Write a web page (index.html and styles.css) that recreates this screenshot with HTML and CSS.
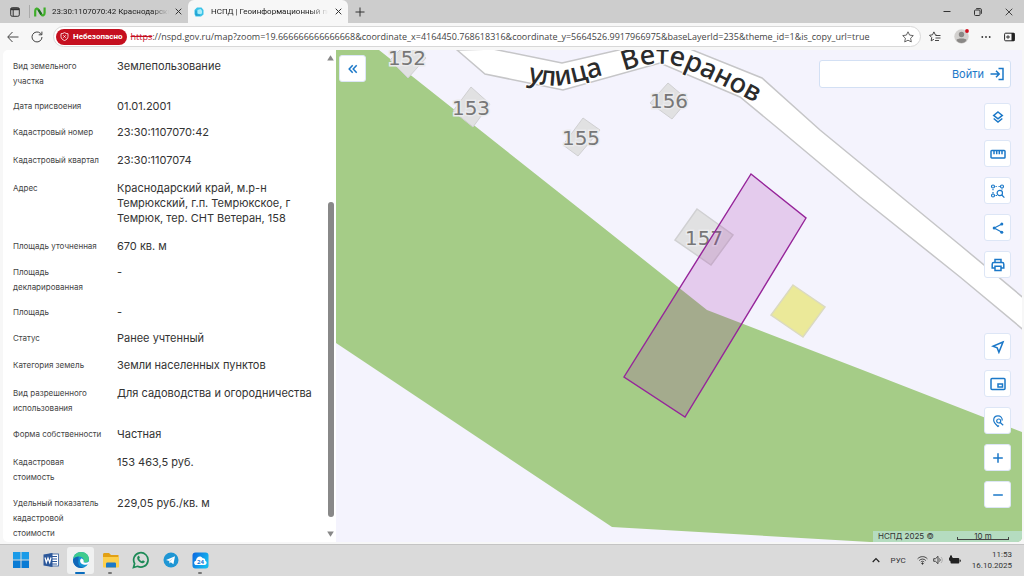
FILE: index.html
```html
<!DOCTYPE html>
<html lang="ru">
<head>
	<meta charset="utf-8">
	<title>НСПД | Геоинформационный портал</title>
	<link rel="stylesheet" href="styles.css">
</head>
<body>
	<!-- Tabs -->
	<div class="tabbar">
		<button class="tab-menu" aria-label="Вкладки">
			<svg width="10" height="10" viewBox="0 0 10 10" fill="none" stroke="#333"><rect x="0.7" y="0.7" width="8.6" height="8.6" rx="1.5"/><path d="M0.7 2.2h8.6" stroke-width="2"/><path d="M3.2 3v6"/></svg>
		</button>
		<div class="tab">
			<svg width="12" height="10" viewBox="0 0 12 10" fill="none" stroke="#3fae2a" stroke-width="2.2"><path d="M1.200 9.500V4C1.200 1.200 3.500 0.800 4.500 2.800l2.800 4.600c1.200 1.800 3.300 1 3.300-1.400V0.500"/><path d="M4.500 2.800l2.800 4.600" stroke="#1d6b22"/></svg>
			<span class="tab-title">23:30:1107070:42 Краснодарский край</span>
			<button class="tab-close" aria-label="Закрыть"><svg width="7" height="7" viewBox="0 0 7 7" stroke="#333"><path d="M0.700 0.700l5.600 5.600M6.300 0.700L0.700 6.300"/></svg></button>
		</div>
		<div class="tab active">
			<svg width="10" height="10" viewBox="0 0 10 10"><path d="M3 0.500h4.500L9.500 3v4.500L7 9.500H1.500L0.500 7V3z" fill="#3cc3e8"/><path d="M3.500 3l3-1 1.500 1.500v3L5 7.500 3.500 6z" fill="#a9ecf8"/><path d="M2 3.500v4.500h4" stroke="#1590c8" fill="none"/></svg>
			<span class="tab-title">НСПД | Геоинформационный портал</span>
			<button class="tab-close" aria-label="Закрыть"><svg width="7" height="7" viewBox="0 0 7 7" stroke="#333"><path d="M0.700 0.700l5.600 5.600M6.300 0.700L0.700 6.300"/></svg></button>
		</div>
		<button class="tab-new" aria-label="Новая вкладка"><svg width="10" height="10" viewBox="0 0 10 10" stroke="#333"><path d="M5 0.500v9M0.500 5h9"/></svg></button>
		<div class="window-buttons">
			<button aria-label="Свернуть"><svg width="8" height="8" viewBox="0 0 8 8" stroke="#333"><path d="M0.500 3.500h7"/></svg></button>
			<button aria-label="Развернуть"><svg width="8" height="8" viewBox="0 0 8 8" fill="none" stroke="#333"><rect x="0.500" y="2" width="5.500" height="5.500" rx="1"/><path d="M2.200 0.600h4a1.200 1.200 0 0 1 1.200 1.200v4"/></svg></button>
			<button aria-label="Закрыть окно"><svg width="8" height="8" viewBox="0 0 8 8" stroke="#333" stroke-width="0.900"><path d="M0.700 0.700l6.600 6.600M7.300 0.700L0.700 7.300"/></svg></button>
		</div>
	</div>

	<!-- Address bar -->
	<div class="toolbar">
		<button aria-label="Назад"><svg width="12" height="12" viewBox="0 0 12 12" fill="none" stroke="#444"><path d="M11.500 6H1M5.500 1L0.700 6l4.800 5"/></svg></button>
		<button aria-label="Обновить"><svg width="12" height="12" viewBox="0 0 12 12" fill="none" stroke="#444"><path d="M11 6A5 5 0 1 1 9.300 2.200L10.800 3.600M10.900 0.600v3.200H7.700"/></svg></button>
		<div class="address">
			<button class="unsafe">
				<svg width="9" height="9" viewBox="0 0 9 9" fill="none" stroke="#fff" stroke-width="0.800"><path d="M4.500 0.600C5.500 1.400 6.700 1.700 8 1.700v2.800c0 2-1.500 3.300-3.500 4C2.500 7.800 1 6.500 1 4.500V1.700c1.300 0 2.500-.3 3.500-1.100z"/><path d="M3.300 3.300l2.400 2.400M5.700 3.300L3.300 5.700"/></svg>
				Небезопасно
			</button>
			<label class="scheme" for="url">https</label>
			<input id="url" type="text" value="://nspd.gov.ru/map?zoom=19.666666666666668&amp;coordinate_x=4164450.768618316&amp;coordinate_y=5664526.9917966975&amp;baseLayerId=235&amp;theme_id=1&amp;is_copy_url=true">
			<button aria-label="В избранное"><svg width="12" height="12" viewBox="0 0 12 12" fill="none" stroke="#555" stroke-width="0.900" stroke-linejoin="round"><path d="M6 0.800l1.600 3.300 3.700.5-2.700 2.600.7 3.700L6 9.200l-3.300 1.700.7-3.700L0.700 4.600l3.700-.5z"/></svg></button>
		</div>
		<div class="toolbar-icons">
			<button aria-label="Избранное"><svg width="12" height="12" viewBox="0 0 12 12" fill="none" stroke="#333" stroke-width="0.900"><path d="M7.500 4L6.300 3.800 4.900 0.900 3.500 3.800 0.500 4.300l2.200 2.200-.5 3.300 2.700-1.500M6.500 4.500h5M6.500 7h5M6 9.500h4"/></svg></button>
			<button class="profile" aria-label="Профиль"><svg width="15" height="15" viewBox="0 0 15 15"><circle cx="7.500" cy="7.500" r="7.200" fill="#d2d0ce"/><circle cx="7.500" cy="5.500" r="2.700" fill="#8a8886"/><path d="M2.500 11c0-2 10-2 10 0-1 4-9 4-10 0z" fill="#8a8886"/><circle cx="13" cy="2" r="1.900" fill="#d1101f"/></svg></button>
			<button aria-label="Меню"><svg width="10" height="10" viewBox="0 0 10 10" fill="#333"><circle cx="1.300" cy="5" r="0.900"/><circle cx="5" cy="5" r="0.900"/><circle cx="8.700" cy="5" r="0.900"/></svg></button>
			<button aria-label="Боковая панель"><svg width="11" height="10" viewBox="0 0 11 10" fill="none" stroke="#222"><rect x="0.600" y="1.200" width="9.800" height="7.600" rx="1"/><path d="M9 1v8" stroke-width="3"/><path d="M2 5h4M4 3.200v3.600" stroke-width="0.900"/></svg></button>
		</div>
	</div>

	<div class="page">
		<!-- Object card -->
		<div class="sidebar">
			<dl class="props">
				<div class="row"><dt>Вид земельного участка</dt><dd>Землепользование</dd></div>
				<div class="row"><dt>Дата присвоения</dt><dd>01.01.2001</dd></div>
				<div class="row tall"><dt>Кадастровый номер</dt><dd>23:30:1107070:42</dd></div>
				<div class="row tall"><dt>Кадастровый квартал</dt><dd>23:30:1107074</dd></div>
				<div class="row tall"><dt>Адрес</dt><dd>Краснодарский край, м.р-н Темрюкский, г.п. Темрюкское, г Темрюк, тер. СНТ Ветеран, 158</dd></div>
				<div class="row"><dt>Площадь уточненная</dt><dd>670 кв. м</dd></div>
				<div class="row"><dt>Площадь декларированная</dt><dd>-</dd></div>
				<div class="row"><dt>Площадь</dt><dd>-</dd></div>
				<div class="row tall"><dt>Статус</dt><dd>Ранее учтенный</dd></div>
				<div class="row tall"><dt>Категория земель</dt><dd>Земли населенных пунктов</dd></div>
				<div class="row tall"><dt>Вид разрешенного использования</dt><dd>Для садоводства и огородничества</dd></div>
				<div class="row tall"><dt>Форма собственности</dt><dd>Частная</dd></div>
				<div class="row tall"><dt>Кадастровая стоимость</dt><dd>153 463,5 руб.</dd></div>
				<div class="row tall"><dt>Удельный показатель кадастровой стоимости</dt><dd>229,05 руб./кв. м</dd></div>
			</dl>
			<div class="scrollbar">
				<svg width="7" height="6" viewBox="0 0 7 6" fill="#888"><path d="M3.500 0.300L6.800 5.500H0.200z"/></svg>
				<div class="track"><div class="thumb"></div></div>
				<svg width="7" height="6" viewBox="0 0 7 6" fill="#888"><path d="M3.500 5.700L0.200 0.500h6.600z"/></svg>
			</div>
		</div>

		<!-- Map -->
		<div class="map">
			<svg class="map-canvas" viewBox="0 0 686 492" preserveAspectRatio="xMinYMin slice">
				<rect width="686" height="492" fill="#f4f3fd"/>
				<path fill="#a5cc87" d="M0 0H43L264 175 371 260 524 319 686 382V492H534L276 477 0 293z"/>
				<g fill="#fff" stroke="#c6c6c8" stroke-width="1.500">
					<path d="M121 0L149 24 227 40 324 13 404 47 444 80 524 147 624 227 690 282V250L624 195 484 80 426 28 354-1H287L226 13 157-1z"/>
				</g>
				<g fill="#e1e1e2" stroke="#d0d0d2">
					<path d="M72-8L90 8 72 28 54 10z"/>
					<path d="M135 37L154 54 137 77 117 61z"/>
					<path d="M247 68L264 80 242 106 227 95z"/>
					<path d="M332 33L352 50 336 69 314 53z"/>
					<path d="M361 159L397 185 375 215 339 190z" stroke-width="1.500"/>
				</g>
				<path d="M457 235L489 257 467 287 435 265z" fill="#ebe999" stroke="#dbdac0" stroke-width="1.500"/>
				<g class="house">
					<text x="71" y="15">152</text>
					<text x="135" y="65">153</text>
					<text x="245" y="95">155</text>
					<text x="333" y="58">156</text>
					<text x="368" y="195">157</text>
				</g>
				<path id="street1" d="M191 31Q213 38 232 34T284 20" fill="none"/>
				<path id="street2" d="M288 21Q322 8 348 18T436 62" fill="none"/>
				<g class="street">
					<text><textPath href="#street1">улица</textPath></text>
					<text><textPath href="#street2">Ветеранов</textPath></text>
				</g>
				<path d="M415 124L470 168 349 367 288 327z" fill="#a020a8" fill-opacity="0.190" stroke="#96259a" stroke-width="1.400"/>
			</svg>

			<button class="tool collapse" aria-label="Свернуть панель"><svg width="10" height="10" viewBox="0 0 10 10"><path d="M4.700 1.300L1.200 5l3.500 3.700M8.700 1.300L5.200 5l3.500 3.700"/></svg></button>

			<div class="login-bar">
				<button class="login">Войти
					<svg width="14" height="14" viewBox="0 0 14 14"><path d="M0.500 7h8.500M6 3.800L9.200 7 6 10.200M8.500 1.500h4.500v11H8.500"/></svg>
				</button>
			</div>

			<div class="tools top">
				<button class="tool" aria-label="Слои"><svg width="14" height="14" viewBox="0 0 14 14"><path d="M7 2l4.300 3.400L7 8.800 2.700 5.400zM2.700 8.500L7 12l4.300-3.500"/></svg></button>
				<button class="tool" aria-label="Линейка"><svg width="16" height="14" viewBox="0 0 16 14"><rect x="1" y="3.500" width="14" height="7.500" rx="0.800"/><path d="M4 4v3.200M6.700 4v3.200M9.300 4v3.200M12 4v3.200"/></svg></button>
				<button class="tool" aria-label="Поиск по области"><svg width="16" height="16" viewBox="0 0 16 16"><g stroke-width="1.200"><circle cx="3" cy="3.500" r="1.500"/><circle cx="12" cy="3.500" r="1.500"/><circle cx="3" cy="12.500" r="1.500"/><path d="M5.500 3.500h1.300M8.500 3.500h1.300M3 6v1.300M3 9v1.500M5.500 12.500h1.500M12 5.500v1"/><circle cx="9.800" cy="10" r="2.700"/><path d="M11.800 12l2.600 2.600"/></g></svg></button>
				<button class="tool" aria-label="Поделиться"><svg width="14" height="14" viewBox="0 0 14 14"><path d="M10.500 3.200L3.200 7l7.300 4" stroke-width="1.200"/><g class="dots"><circle cx="10.800" cy="3" r="1.500"/><circle cx="3.200" cy="7" r="1.500"/><circle cx="10.800" cy="11.200" r="1.500"/></g></svg></button>
				<button class="tool" aria-label="Печать"><svg width="14" height="14" viewBox="0 0 14 14"><path d="M4 4.500V1.500h6v3M4 10H1.200V6.200c0-1 .6-1.700 1.600-1.700h8.400c1 0 1.600.7 1.600 1.700V10H10M4 8.300h6v4.200H4z"/></svg></button>
			</div>

			<div class="tools bottom">
				<button class="tool" aria-label="Моё местоположение"><svg width="14" height="14" viewBox="0 0 14 14"><path d="M12 2L1.800 6.200l4.400 1.700 1.700 4.400z"/></svg></button>
				<button class="tool" aria-label="Обзорная карта"><svg width="16" height="14" viewBox="0 0 16 14"><rect x="1" y="1.500" width="14" height="11" rx="1"/><rect x="8" y="7" width="4.500" height="3"/></svg></button>
				<button class="tool" aria-label="Поиск объекта"><svg width="14" height="14" viewBox="0 0 14 14"><g stroke-width="1.200"><path d="M11.300 6.500C11.300 3.500 9.500 1.900 7 1.900S2.700 3.700 2.700 6.200c0 2.300 2 4 4.300 6.300l1-1"/><circle cx="7.700" cy="7" r="2"/><path d="M9.200 8.500l3 2.700"/></g></svg></button>
				<button class="tool" aria-label="Приблизить"><svg width="12" height="12" viewBox="0 0 12 12"><path d="M6 1.200v9.600M1.200 6h9.600"/></svg></button>
				<button class="tool" aria-label="Отдалить"><svg width="12" height="12" viewBox="0 0 12 12"><path d="M1.200 6h9.600"/></svg></button>
			</div>

			<div class="attribution">
				<span>НСПД 2025 ©</span>
				<span class="scale">10 m</span>
			</div>
		</div>
	</div>

	<!-- Taskbar -->
	<div class="taskbar">
		<div class="apps">
			<button aria-label="Пуск"><svg width="18" height="18" viewBox="0 0 18 18"><path fill="#1a9be8" d="M1 1h7.500v7.500H1zM9.500 1H17v7.500H9.500z"/><path fill="#0a7bd4" d="M1 9.500h7.500V17H1zM9.500 9.500H17V17H9.500z"/></svg></button>
			<button aria-label="Word"><svg width="18" height="18" viewBox="0 0 18 18"><rect x="8" y="3" width="8.500" height="12" fill="#fff" stroke="#2b579a" stroke-width="0.800"/><path d="M10 5.500h5M10 8h5M10 10.500h5M10 13h5" stroke="#2b579a"/><path d="M1.500 3.500L10.500 2v14l-9-1.500z" fill="#2b579a"/><path d="M3 6.500l1.300 5L6 7l1.700 4.500L9 6.500" stroke="#fff" fill="none" stroke-width="1.200"/></svg></button>
			<button class="current" aria-label="Edge"><svg width="18" height="18" viewBox="0 0 18 18"><circle cx="9" cy="9" r="8" fill="#1593d4"/><path d="M1.200 8C2 3 5.500 1 9 1c5 0 8 3.500 8 7 0 3-3 4-5.500 3.300C13 8 10 5 6.500 5.500 3.500 6 1.800 7 1.200 8z" fill="#3fcb8c"/><path d="M6.500 5.500C3 6 1 8 1 9c0 4 3 8 8 8 1 0 2-.2 3-.6C7.500 16.500 5.500 13 6.500 9.500z" fill="#1267b8"/><path d="M9.300 7.500c-1.800 1-1.800 5 2 6 2 .5 4 0 5.200-.8 .5-.8.7-1 .5-2-2 1.300-4.500 1.200-5.500.6 .8-1.500-.4-3.800-2.200-3.800z" fill="#fff"/></svg></button>
			<button class="running" aria-label="Проводник"><svg width="18" height="18" viewBox="0 0 18 18"><path d="M1 3.500C1 2.600 1.500 2 2.500 2H7l2 2h7.500v4H1z" fill="#e2a014"/><path d="M1 6h16v9.500c0 .6-.4 1-1 1H2c-.6 0-1-.4-1-1z" fill="#fccf4d"/><path d="M4 16.500V13c0-1 .5-1.500 1.500-1.500h7c1 0 1.500.5 1.500 1.500v3.500z" fill="#1b79c9"/></svg></button>
			<button aria-label="WhatsApp"><svg width="18" height="18" viewBox="0 0 18 18"><path d="M1.500 16.500l1.100-4A7.200 7.200 0 1 1 5.500 15.300z" fill="none" stroke="#1d8a57" stroke-width="1.700"/><path d="M5.800 5.200c.8-.8 1.300-.5 1.600.3l.5 1.200-.8 1.100c.6 1.200 1.500 2 2.800 2.500l1-1 1.800 1c.4 1-1 2.200-2.300 2C7.500 11.700 5 9 5.200 6.500z" fill="#1d8a57"/></svg></button>
			<button aria-label="Telegram"><svg width="16" height="16" viewBox="0 0 16 16"><circle cx="8" cy="8" r="7.500" fill="#1f96d4"/><path d="M3 7.900l9-3.700-1.600 8L7.800 10.200 6.500 11.500 6.200 9z" fill="#fff"/><path d="M6.200 9L10.500 5.800 7 9.600z" fill="#a8cfe6"/></svg></button>
			<button class="running" aria-label="Битрикс24"><svg width="17" height="17" viewBox="0 0 17 17"><defs><linearGradient id="bx" x2="1" y2="0.500"><stop stop-color="#0b66e0"/><stop offset="1" stop-color="#15b9ef"/></linearGradient></defs><rect x="0.500" y="0.500" width="16" height="16" rx="3" fill="url(#bx)"/><path d="M4.500 13C1.500 13 1.500 9 4 8.700 4 5 8.500 3 10.700 6.200c2.300-.2 2.800 1.500 2.500 2.600C15.500 9.500 15 13 12.500 13z" fill="#fff"/><text x="8.500" y="11.500" text-anchor="middle" font-size="6" font-weight="700" fill="#0b76d8">24</text></svg></button>
		</div>
		<div class="tray">
			<svg width="8" height="6" viewBox="0 0 8 6" fill="none" stroke="#222" stroke-width="1.200"><path d="M0.700 5L4 1.500 7.300 5"/></svg>
			<span class="lang">РУС</span>
			<div class="status">
				<svg width="11" height="10" viewBox="0 0 11 10" fill="none" stroke="#333" stroke-width="0.900"><path d="M0.600 3.800c2.800-2.900 7-2.900 9.800 0M2.200 5.500c1.900-1.900 4.700-1.900 6.600 0M3.800 7c1-1 2.400-1 3.400 0"/><circle cx="5.500" cy="8.500" r="0.700" fill="#333"/></svg>
				<svg width="11" height="10" viewBox="0 0 11 10" fill="none" stroke="#333" stroke-width="0.900"><path d="M0.700 3.700h1.800L5 1.300v7.400L2.500 6.300H0.700z"/><path d="M6.500 3.500c.8.800.8 2.200 0 3"/><path d="M8 2c1.700 1.700 1.700 4.300 0 6" stroke="#aaa"/></svg>
				<svg width="12" height="10" viewBox="0 0 12 10" fill="#222"><rect x="1.500" y="3" width="8.800" height="5.500" rx="1"/><rect x="10.600" y="4.700" width="1.200" height="2"/><path d="M1 0.500v2H0v2c0 1.200 1 1.800 2 1.800s2-.6 2-1.800v-2H3v-2z"/></svg>
			</div>
			<div class="clock"><span>11:53</span><span>16.10.2025</span></div>
		</div>
	</div>
</body>
</html>
```
FILE: styles.css
```css
* {
	margin: 0;
	padding: 0;
	box-sizing: border-box;
}
body {
	display: flex;
	flex-direction: column;
	height: 100vh;
	overflow: hidden;
	background-color: #f7f7f7;
	color: #333;
	font-family: "Open Sans", "Noto Sans", sans-serif;
	font-size: 9px;
}
button {
	display: flex;
	align-items: center;
	justify-content: center;
	border: none;
	background: none;
	color: inherit;
	font: inherit;
	cursor: pointer;
}
svg {
	display: block;
	flex-shrink: 0;
}

/* Tabs */
.tabbar {
	display: flex;
	align-items: center;
	height: 23px;
	background-color: #cdcdcd;
}
.tab-menu {
	width: 29px;
}
.tab {
	display: flex;
	align-items: center;
	gap: 6px;
	width: 159px;
	height: 23px;
	padding: 0 6px 0 4px;
	border-left: 1px solid #aaa;
	border-image: linear-gradient(transparent 25%, #aaa 25%, #aaa 75%, transparent 75%) 1;
}
.tab.active {
	width: 160px;
	gap: 7px;
	padding-left: 6px;
	border: none;
	border-radius: 6px 6px 0 0;
	background-color: #f7f7f7;
}
.tab-title {
	flex: 1;
	overflow: hidden;
	white-space: nowrap;
	color: #1b1b1b;
	font-family: Roboto, sans-serif;
	font-size: 8px;
	-webkit-mask-image: linear-gradient(to right, #000 85%, transparent);
	mask-image: linear-gradient(to right, #000 85%, transparent);
}
.tab-new {
	width: 24px;
}
.window-buttons {
	display: flex;
	margin-left: auto;
}
.window-buttons button {
	width: 31px;
}

/* Address bar */
.toolbar {
	display: flex;
	align-items: center;
	height: 27px;
	padding: 0 3px 0 1px;
}
.toolbar > button {
	width: 24px;
}
.address {
	display: flex;
	flex: 1;
	align-items: center;
	height: 21px;
	margin-left: 4px;
	padding: 0 6px 0 2px;
	border: 1px solid #d8d8d8;
	border-radius: 11px;
	background-color: #fff;
}
.unsafe {
	gap: 4px;
	height: 16px;
	padding: 0 4px;
	border-radius: 8px;
	background-color: #c50f1f;
	color: #fff;
	font-family: Roboto, sans-serif;
	font-weight: 700;
	font-size: 8px;
}
.scheme {
	margin-left: 4px;
	color: #c50f1f;
	text-decoration: line-through;
}
.address input {
	flex: 1;
	min-width: 0;
	border: none;
	outline: none;
	background: none;
	color: #444;
	font: inherit;
}
.toolbar-icons {
	display: flex;
	align-items: center;
	justify-content: space-around;
	width: 100px;
	padding-left: 2px;
}

.page {
	display: flex;
	flex: 1;
	min-height: 0;
	padding: 0 2px 2px 3px;
}

/* Object card */
.sidebar {
	display: flex;
	width: 333px;
	overflow: hidden;
	border-radius: 5px 0 0 5px;
	background-color: #fff;
	font-family: Inter, sans-serif;
}
.props {
	display: flex;
	flex: 1;
	flex-direction: column;
	gap: 10px;
	padding: 9px 8px 0 10px;
}
.row {
	display: flex;
	min-height: 16px;
	line-height: 15px;
}
.row dt {
	width: 104px;
	padding-right: 12px;
	font-size: 8px;
	color: #444;
}
.row dd {
	flex: 1;
	font-size: 11px;
}
.row.tall {
	padding-bottom: 1px;
}
.row.tall dd {
	padding-bottom: 2px;
}
.scrollbar {
	display: flex;
	flex-direction: column;
	align-items: center;
	width: 11px;
	padding: 5px 0;
}
.track {
	display: flex;
	flex: 1;
	flex-direction: column;
	justify-content: flex-end;
	padding-bottom: 14px;
}
.thumb {
	width: 6px;
	height: 69%;
	border-radius: 3px;
	background-color: #888;
}

/* Map */
.map {
	position: relative;
	flex: 1;
	overflow: hidden;
	border-radius: 0 0 5px 0;
	background-color: #f4f3fd;
	font-family: Inter, sans-serif;
}
.map-canvas {
	position: absolute;
	width: 100%;
	height: 100%;
}
.house text {
	fill: #777;
	stroke: #ebebed;
	stroke-width: 3px;
	paint-order: stroke;
	font-family: "DejaVu Sans", sans-serif;
	font-size: 20px;
	text-anchor: middle;
}
.street text {
	fill: #2b2b2b;
	stroke: #fff;
	stroke-width: 2px;
	paint-order: stroke;
	font-family: "Noto Sans", sans-serif;
	font-size: 27px;
	font-weight: 500;
}
.tool {
	width: 27px;
	height: 27px;
	border: 1px solid #dde6f6;
	border-radius: 3px;
	background-color: #fff;
}
.tool svg,
.login svg {
	fill: none;
	stroke: #1b78c8;
	stroke-width: 1.5px;
}
.tool .dots {
	fill: #1b78c8;
	stroke: none;
}
.collapse {
	position: absolute;
	top: 5px;
	left: 3px;
}
.login-bar {
	position: absolute;
	top: 10px;
	right: 11px;
	display: flex;
	justify-content: flex-end;
	width: 28%;
	height: 28px;
	padding-right: 6px;
	border: 1px solid #d3e0f4;
	border-radius: 3px;
	background-color: #fff;
}
.login {
	gap: 6px;
	color: #1b78c8;
	font-size: 11px;
}
.tools {
	position: absolute;
	right: 11px;
	display: flex;
	flex-direction: column;
	gap: 10px;
}
.tools.top {
	top: 53px;
}
.tools.bottom {
	bottom: 34px;
}
.attribution {
	position: absolute;
	right: 0;
	bottom: 0;
	display: flex;
	justify-content: space-between;
	width: 149px;
	height: 11px;
	padding: 0 13px 0 5px;
	background-color: #b5dcc0;
	font-size: 8px;
	line-height: 11px;
}
.scale {
	width: 52px;
	height: 9px;
	border: 1px solid #444;
	border-top-color: transparent;
	border-image: linear-gradient(transparent 65%, #444 65%) 1;
	line-height: 9px;
	text-align: center;
}

/* Taskbar */
.taskbar {
	display: flex;
	align-items: center;
	justify-content: space-between;
	height: 32px;
	padding: 0 12px 1px 7px;
	border-top: 1px solid #c4c4c4;
	background-color: #dadada;
}
.apps {
	display: flex;
	gap: 3px;
}
.apps button {
	position: relative;
	width: 27px;
	height: 27px;
	border-radius: 3px;
}
.apps .current {
	background-color: #f0f1f1;
}
.apps .current::after,
.apps .running::after {
	content: "";
	position: absolute;
	bottom: 0;
	left: 11px;
	width: 4px;
	height: 2px;
	border-radius: 1px;
	background-color: #777;
}
.apps .current::after {
	left: 8px;
	width: 10px;
	background-color: #0a6cbd;
}
.tray {
	display: flex;
	align-items: center;
	gap: 11px;
	font-family: Roboto, sans-serif;
	font-size: 8px;
}
.status {
	display: flex;
	gap: 5px;
}
.clock {
	display: flex;
	flex-direction: column;
	align-items: flex-end;
	line-height: 11px;
}
```
